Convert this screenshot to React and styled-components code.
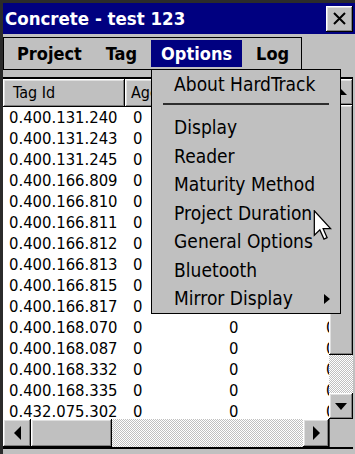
import React from "react";
import styled, { createGlobalStyle } from "styled-components";

const GlobalStyle = createGlobalStyle`
  html, body { margin: 0; padding: 0; background: #c0c0c0; }
  body {
    font-family: "DejaVu Sans Condensed", "DejaVu Sans", sans-serif;
    font-stretch: condensed;
  }
  * { box-sizing: border-box; }
`;

const GRAY = "#c0c0c0";
const bevel = `
  box-shadow: inset -1px -1px #000, inset 1px 1px #fff,
    inset -2px -2px #808080, inset 2px 2px #dfdfdf;
`;

const Window = styled.div`
  position: relative;
  width: 355px;
  height: 454px;
  background: ${GRAY};
  border-left: 3px solid #2b2b2b;
  border-top: 3px solid #2b2b2b;
  display: flex;
  flex-direction: column;
  overflow: hidden;
`;

const TitleBar = styled.div`
  height: 31px;
  flex: none;
  background: #000080;
  color: #fff;
  display: flex;
  align-items: center;
  justify-content: space-between;
  padding: 0 2px 0 2px;
  font-weight: bold;
  font-size: 18.5px;
`;

const CloseButton = styled.div`
  width: 27px;
  height: 26px;
  background: ${GRAY};
  ${bevel}
  display: flex;
  align-items: center;
  justify-content: center;
`;

const MenuArea = styled.div`
  height: 43px;
  flex: none;
  padding-top: 3px;
  position: relative;
  z-index: 2;
`;

const MenuBar = styled.div`
  width: 299px;
  height: 33px;
  border: 1px solid #000;
  padding: 2px 3px;
  display: flex;
  gap: 4px;
`;

const MenuItem = styled.div`
  position: relative;
  height: 27px;
  line-height: 27px;
  padding: 0 10px;
  font-weight: bold;
  font-size: 18px;
  color: ${(p) => (p.$active ? "#fff" : "#000")};
  background: ${(p) => (p.$active ? "#000080" : "transparent")};
`;

const Dropdown = styled.div`
  position: absolute;
  top: calc(100% + 2px);
  left: 0;
  width: 190px;
  height: 245px;
  background: ${GRAY};
  border: 1px solid #000;
  color: #000;
  font-weight: normal;
  font-size: 19px;
`;

const DropItem = styled.div`
  position: relative;
  height: ${(p) => (p.$first ? 28 : 28.5)}px;
  line-height: ${(p) => (p.$first ? 28 : 28.5)}px;
  padding-left: 22px;
  white-space: nowrap;
`;

const Separator = styled.div`
  height: 2px;
  margin: 5px 11px 8px 11px;
  background: #2e2e2e;
`;

const SubArrow = styled.span`
  position: absolute;
  right: 10px;
  top: 10px;
  width: 0;
  height: 0;
  border-top: 5px solid transparent;
  border-bottom: 5px solid transparent;
  border-left: 6px solid #000;
`;

const ListFrame = styled.div`
  flex: none;
  height: 372px;
  display: grid;
  grid-template-columns: 326px 24px;
  grid-template-rows: 340px 28px;
  border-top: 2px solid #000;
  border-bottom: 2px solid #000;
  margin-right: 2px;
`;

const ListBody = styled.div`
  background: #fff;
  overflow: hidden;
  display: flex;
  flex-direction: column;
`;

const HeaderRow = styled.div`
  display: flex;
  height: 28px;
  flex: none;
  background: ${GRAY};
`;

const HeaderCell = styled.div`
  flex: none;
  width: ${(p) => p.$w}px;
  padding-left: ${(p) => p.$pl}px;
  height: 28px;
  line-height: 27px;
  font-size: 16px;
  white-space: nowrap;
  overflow: hidden;
  ${bevel}
`;

const Row = styled.div`
  display: flex;
  height: 21px;
  flex: none;
  line-height: 21px;
  font-size: 16.5px;
  color: #000;
`;

const Cell = styled.div`
  flex: none;
  width: ${(p) => p.$w}px;
  padding-left: ${(p) => p.$pl}px;
  white-space: nowrap;
  overflow: hidden;
`;

const VScroll = styled.div`
  display: flex;
  flex-direction: column;
`;

const HScroll = styled.div`
  display: flex;
`;

const ScrollButton = styled.div`
  flex: none;
  width: ${(p) => p.$w}px;
  height: ${(p) => p.$h}px;
  background: ${GRAY};
  ${bevel}
  display: flex;
  align-items: center;
  justify-content: center;
`;

const Thumb = styled.div`
  flex: none;
  width: ${(p) => p.$w}px;
  height: ${(p) => p.$h}px;
  background: ${GRAY};
  ${bevel}
`;

const Track = styled.div`
  flex: 1;
  background: repeating-conic-gradient(${GRAY} 0% 25%, #fff 0% 50%) 0 0 / 2px 2px;
`;

const Corner = styled.div`
  background: ${GRAY};
  border-left: 1px solid #404040;
`;

const Arrow = styled.span`
  width: 0;
  height: 0;
  ${(p) =>
    p.$dir === "up"
      ? `border-left:6px solid transparent;border-right:6px solid transparent;border-bottom:6px solid #000;`
      : p.$dir === "down"
      ? `border-left:6.5px solid transparent;border-right:6.5px solid transparent;border-top:7px solid #000;`
      : p.$dir === "left"
      ? `border-top:7px solid transparent;border-bottom:7px solid transparent;border-right:7px solid #000;`
      : `border-top:7px solid transparent;border-bottom:7px solid transparent;border-left:7px solid #000;`}
`;

const Cursor = styled.svg`
  position: absolute;
  left: 310px;
  top: 207px;
  z-index: 5;
`;

const rows = [
  "0.400.131.240",
  "0.400.131.243",
  "0.400.131.245",
  "0.400.166.809",
  "0.400.166.810",
  "0.400.166.811",
  "0.400.166.812",
  "0.400.166.813",
  "0.400.166.815",
  "0.400.166.817",
  "0.400.168.070",
  "0.400.168.087",
  "0.400.168.332",
  "0.400.168.335",
  "0.432.075.302",
];

const cols = [
  { w: 122, pl: 6 },
  { w: 96, pl: 8 },
  { w: 100, pl: 8 },
  { w: 40, pl: 5 },
];

const menuItems = [
  "Display",
  "Reader",
  "Maturity Method",
  "Project Duration",
  "General Options",
  "Bluetooth",
];

export default function App() {
  return (
    <>
      <GlobalStyle />
      <Window>
        <TitleBar>
          <span>Concrete - test 123</span>
          <CloseButton>
            <svg width="13" height="13" viewBox="0 0 13 13">
              <path d="M1 1 L12 12 M12 1 L1 12" stroke="#000" strokeWidth="2" />
            </svg>
          </CloseButton>
        </TitleBar>
        <MenuArea>
          <MenuBar>
            <MenuItem>Project</MenuItem>
            <MenuItem>Tag</MenuItem>
            <MenuItem $active>
              Options
              <Dropdown>
                <DropItem $first>About HardTrack</DropItem>
                <Separator />
                {menuItems.map((m) => (
                  <DropItem key={m}>{m}</DropItem>
                ))}
                <DropItem>
                  Mirror Display
                  <SubArrow />
                </DropItem>
              </Dropdown>
            </MenuItem>
            <MenuItem>Log</MenuItem>
          </MenuBar>
        </MenuArea>
        <ListFrame>
          <ListBody>
            <HeaderRow>
              <HeaderCell $w={122} $pl={10}>Tag Id</HeaderCell>
              <HeaderCell $w={96} $pl={6}>Age</HeaderCell>
              <HeaderCell $w={100} $pl={6}>Temp</HeaderCell>
              <HeaderCell $w={40} $pl={6}>Max</HeaderCell>
            </HeaderRow>
            {rows.map((r) => (
              <Row key={r}>
                <Cell $w={cols[0].w} $pl={cols[0].pl}>{r}</Cell>
                <Cell $w={cols[1].w} $pl={cols[1].pl}>0</Cell>
                <Cell $w={cols[2].w} $pl={cols[2].pl}>0</Cell>
                <Cell $w={cols[3].w} $pl={cols[3].pl}>0</Cell>
              </Row>
            ))}
          </ListBody>
          <VScroll>
            <ScrollButton $w={24} $h={26}><Arrow $dir="up" /></ScrollButton>
            <Thumb $w={24} $h={250} />
            <Track />
            <ScrollButton $w={24} $h={26}><Arrow $dir="down" /></ScrollButton>
          </VScroll>
          <HScroll>
            <ScrollButton $w={28} $h={28}><Arrow $dir="left" /></ScrollButton>
            <Thumb $w={81} $h={28} />
            <Track />
            <ScrollButton $w={26} $h={28}><Arrow $dir="right" /></ScrollButton>
          </HScroll>
          <Corner />
        </ListFrame>
        <Cursor width="20" height="30" viewBox="0 0 12 19">
          <path
            d="M0.5 0.5 L0.5 16 L4 12.6 L6.6 18.4 L8.6 17.5 L6.1 11.8 L10.8 11.8 Z"
            fill="#fff"
            stroke="#000"
            strokeWidth="0.8"
            strokeLinejoin="miter"
          />
        </Cursor>
      </Window>
    </>
  );
}
